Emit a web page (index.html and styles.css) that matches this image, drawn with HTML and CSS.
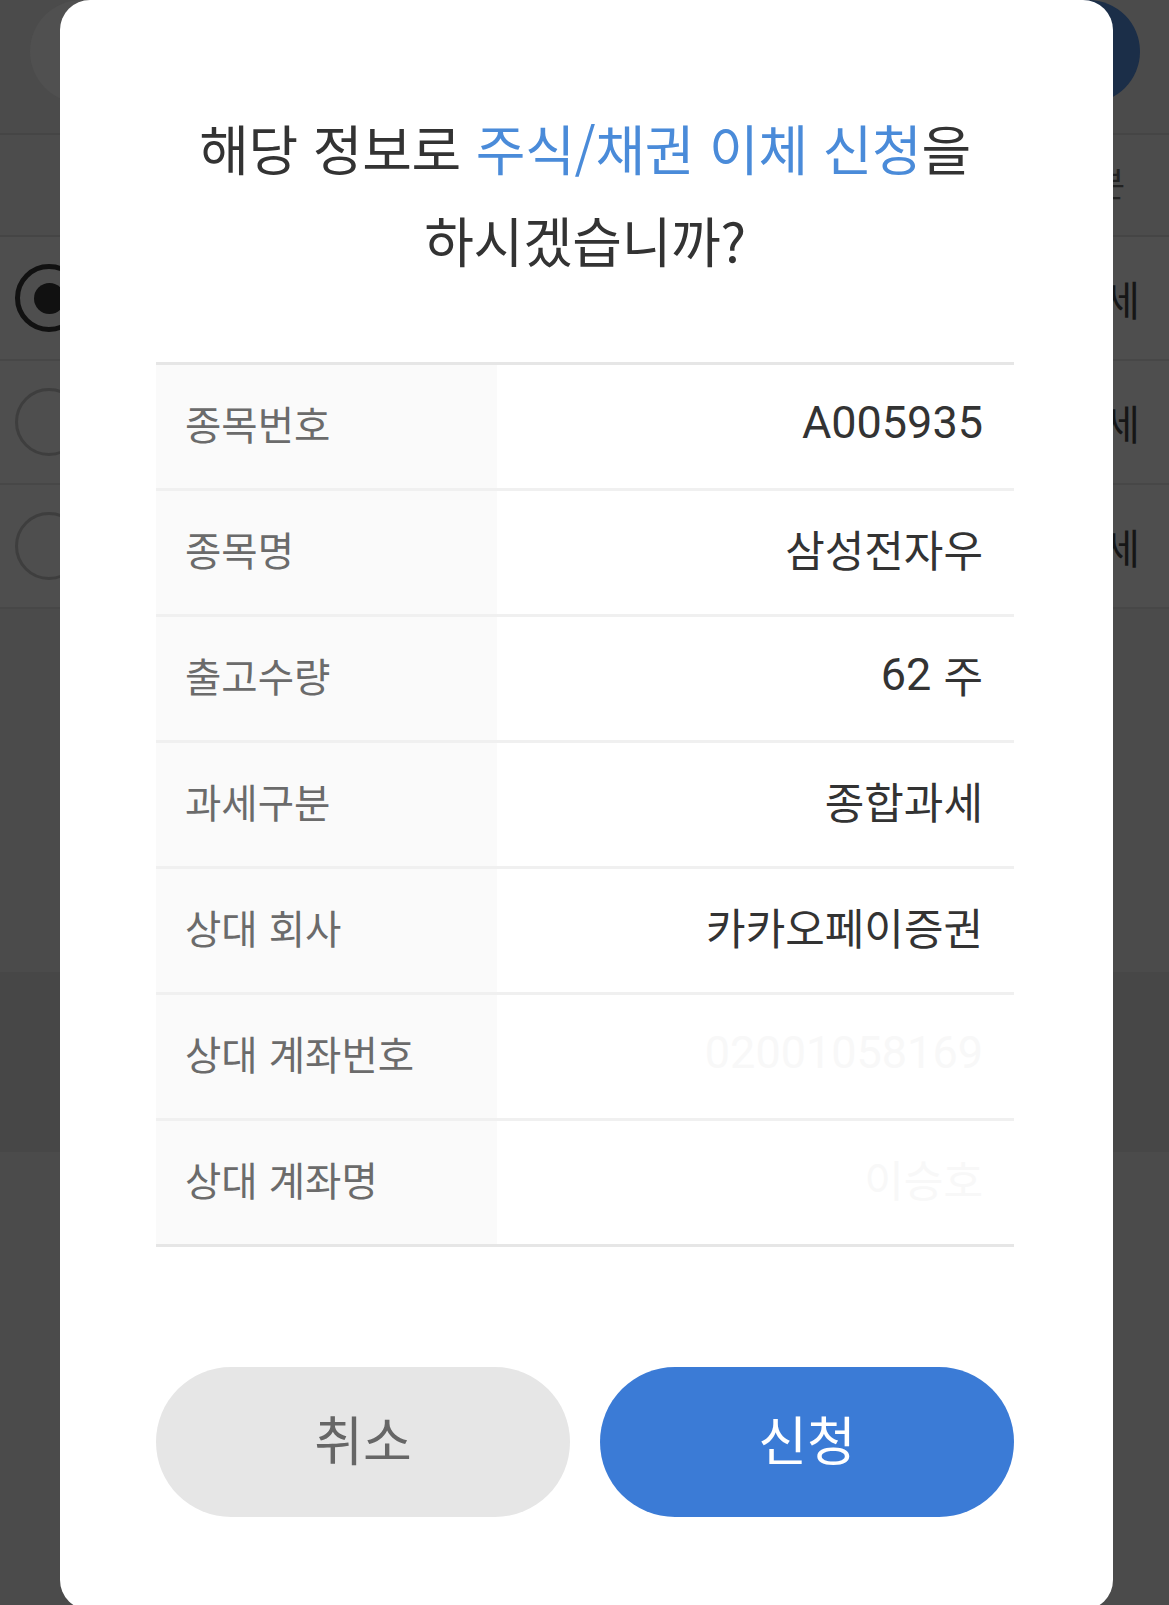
FILE: index.html
```html
<!DOCTYPE html>
<html lang="ko">
<head>
<meta charset="utf-8">
<title>주식/채권 이체 신청</title>
<link rel="stylesheet" href="styles.css">
</head>
<body>
<div class="page">
  <header class="top-bar">
    <div class="pill pill-gray"></div>
    <div class="pill pill-navy"></div>
  </header>
  <div class="tab-row"><span class="col-head">과세구분</span></div>
  <ul class="list">
    <li class="item"><span class="radio radio-on"></span><span class="item-text">종합과세</span></li>
    <li class="item"><span class="radio"></span><span class="item-text">분리과세</span></li>
    <li class="item"><span class="radio"></span><span class="item-text">비과세</span></li>
  </ul>
  <div class="band band-light"></div>
  <div class="band band-dark"></div>
  <div class="band band-rest"></div>
</div>

<div class="dialog">
  <h1 class="title">해당 정보로 <span class="hl">주식/채권 이체 신청</span>을<br>하시겠습니까?</h1>
  <div class="info">
    <div class="info-row"><div class="info-label">종목번호</div><div class="info-value"><span class="num">A005935</span></div></div>
    <div class="info-row"><div class="info-label">종목명</div><div class="info-value">삼성전자우</div></div>
    <div class="info-row"><div class="info-label">출고수량</div><div class="info-value"><span class="num">62</span>&nbsp;주</div></div>
    <div class="info-row"><div class="info-label">과세구분</div><div class="info-value">종합과세</div></div>
    <div class="info-row"><div class="info-label">상대 회사</div><div class="info-value">카카오페이증권</div></div>
    <div class="info-row"><div class="info-label">상대 계좌번호</div><div class="info-value info-masked"><span class="num">02001058169</span></div></div>
    <div class="info-row"><div class="info-label">상대 계좌명</div><div class="info-value info-masked">이승호</div></div>
  </div>
  <div class="actions">
    <button class="btn btn-cancel" type="button">취소</button>
    <button class="btn btn-apply" type="button">신청</button>
  </div>
</div>
</body>
</html>
```

FILE: styles.css
```css
html, body {
  margin: 0;
  padding: 0;
}
body {
  width: 1169px;
  height: 1605px;
  overflow: hidden;
  position: relative;
  background: #4b4b4b;
  font-family: "Noto Sans CJK KR", "Noto Sans", sans-serif;
}

/* dimmed page underneath */
.page {
  width: 1169px;
}
.top-bar {
  height: 135px;
  box-sizing: border-box;
  border-bottom: 2px solid #454545;
  display: flex;
  justify-content: space-between;
  padding: 0 29px 0 30px;
  background: #4b4b4b;
}
.pill {
  width: 420px;
  height: 103px;
  border-radius: 52px;
}
.pill-gray { background: #505050; }
.pill-navy { background: #1b2e48; }
.tab-row {
  height: 102px;
  box-sizing: border-box;
  border-bottom: 2px solid #454545;
  display: flex;
  align-items: center;
  justify-content: flex-end;
  padding-right: 44px;
  padding-bottom: 6px;
  background: #4c4c4c;
}
.col-head {
  font-size: 34px;
  color: #222;
}
.list {
  list-style: none;
  margin: 0;
  padding: 0;
}
.item {
  height: 124px;
  box-sizing: border-box;
  border-bottom: 2px solid #474747;
  display: flex;
  align-items: center;
  justify-content: space-between;
  padding: 0 29px 0 15px;
  background: #4e4e4e;
}
.radio {
  width: 68px;
  height: 68px;
  box-sizing: border-box;
  border-radius: 50%;
  border: 3px solid #3e3e3e;
  display: flex;
  align-items: center;
  justify-content: center;
}
.radio-on {
  border: 5px solid #111;
}
.radio-on::after {
  content: "";
  width: 31px;
  height: 31px;
  border-radius: 50%;
  background: #111;
}
.item-text {
  font-size: 41px;
  color: #161616;
}
.band-light { height: 363px; background: #4b4b4b; }
.band-dark { height: 180px; background: #474747; }
.band-rest { height: 460px; background: #4b4b4b; }

/* dialog */
.dialog {
  position: absolute;
  left: 60px;
  top: 0;
  width: 1053px;
  height: 1610px;
  box-sizing: border-box;
  background: #fff;
  border-radius: 30px;
  padding: 102px 99px 0 96px;
}
.title {
  margin: 0;
  font-size: 54px;
  line-height: 92px;
  font-weight: 400;
  color: #333;
  text-align: center;
  letter-spacing: -0.3px;
}
.hl { color: #4a8bd9; }

.info {
  margin-top: 76px;
  border-top: 3px solid #e6e6e6;
  border-bottom: 3px solid #e6e6e6;
}
.info-row {
  display: grid;
  grid-template-columns: 341px 1fr;
  height: 126px;
  box-sizing: border-box;
  border-bottom: 3px solid #f0f0f0;
}
.info-row:last-child {
  height: 123px;
  border-bottom: none;
}
.info-label {
  background: #fafafa;
  display: flex;
  align-items: center;
  padding-left: 29px;
  padding-bottom: 9px;
  font-size: 39.5px;
  color: #6b6b6b;
}
.info-value {
  display: flex;
  align-items: center;
  justify-content: flex-end;
  padding-right: 31px;
  padding-bottom: 9px;
  font-size: 43px;
  color: #333;
}
.num {
  font-family: Roboto, "Noto Sans", sans-serif;
  font-size: 45px;
}
.info-masked {
  color: #f8f8f8;
}

.actions {
  display: grid;
  grid-template-columns: 1fr 1fr;
  gap: 30px;
  margin-top: 120px;
}
.btn {
  height: 150px;
  border: none;
  border-radius: 75px;
  font-family: "Noto Sans CJK KR", sans-serif;
  font-size: 53px;
  padding: 0 0 8px;
}
.btn-cancel { background: #e6e6e6; color: #666; }
.btn-apply { background: #3b7bd6; color: #fff; }
```
